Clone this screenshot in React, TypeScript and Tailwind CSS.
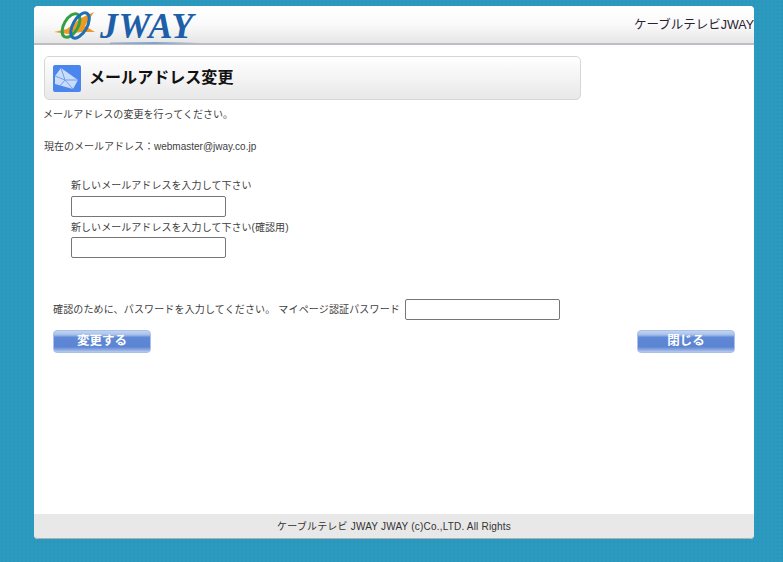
const sans = 'font-["Liberation_Sans","Noto_Sans_CJK_JP",sans-serif]';

function Logo() {
  return (
    <div className="flex items-center ml-[20px] h-full">
      <svg width="44" height="32" viewBox="0 0 44 32" className="shrink-0 mt-[2px]">
        <path d="M0 22 L13 19 L27 8 L40 2 L31 16 L41 22 L27 22 L14 24 Z" fill="#ee9a22" />
        <ellipse cx="17" cy="15.5" rx="7" ry="13" transform="rotate(30 17 15.5)" fill="none" stroke="#35a043" strokeWidth="3" />
        <ellipse cx="26" cy="15.5" rx="7" ry="14" transform="rotate(30 26 15.5)" fill="none" stroke="#1f6fb5" strokeWidth="3" />
      </svg>
      <div className="relative ml-[2px] mt-[3px]">
        <span className='block font-["Liberation_Serif",serif] italic font-bold text-[36px] leading-[34px] tracking-[0.6px] text-[#1d5fa8]'>JWAY</span>
        <div className="absolute left-[10px] right-[-6px] bottom-[-1px] h-[2px] bg-gradient-to-r from-[#1d5fa8]/20 via-[#7ea5cf] to-transparent" />
      </div>
    </div>
  );
}

function MailIcon() {
  return (
    <svg width="28" height="27" viewBox="0 0 28 27" className="shrink-0">
      <rect width="28" height="27" rx="2" fill="#4a86ee" />
      <path d="M2 11 L8 3 L25 15 L20 24 L2 19 Z" fill="#c9dcf8" />
      <path d="M8 3 L12 15 L25 15 M2 11 L12 15 L7 21 M12 15 L20 24" fill="none" stroke="#6f9ff0" strokeWidth="1" />
    </svg>
  );
}

function GlossButton({ label }: { label: string }) {
  return (
    <button className="w-[98px] h-[23px] rounded-[4px] border border-[#a9c0e8] bg-[linear-gradient(to_bottom,#c3d4f1_0%,#a7c0ea_18%,#5f88d6_30%,#5b84d3_75%,#8eabe3_90%,#bccdee_100%)] text-white text-[12.5px] font-bold leading-none">
      {label}
    </button>
  );
}

function TextBox({ className }: { className: string }) {
  return <input type="text" className={`block h-[21px] rounded-[2px] border border-[#767676] bg-white ${className}`} />;
}

export default function App() {
  return (
    <div className={`${sans} h-[562px] bg-[#2c9abf] bg-[radial-gradient(#2995b9_0.7px,transparent_0.8px)] bg-[length:4px_4px] pt-[6px] pl-[34px] pr-[29px] overflow-hidden`}>
      <div className="h-[533px] rounded-[4px] bg-white flex flex-col overflow-hidden">
        <header className="h-[39px] shrink-0 flex items-center justify-between rounded-t-[4px] border-b-2 border-[#bdbdc3] bg-gradient-to-b from-white via-[#fafafa] to-[#e6e6e6]">
          <Logo />
          <span className="text-[12.5px] text-[#2a2030] whitespace-nowrap pt-[1px]">ケーブルテレビJWAY</span>
        </header>

        <main className="flex-1 pl-[9px] pr-[19px] text-[10px] tracking-[0.05px] text-[#404040] leading-[15px]">
          <div className="mt-[11px] ml-px w-[537px] h-[44px] flex items-center gap-[8px] pl-[8px] rounded-[5px] border border-[#d6d6d6] bg-gradient-to-b from-white to-[#e8e8e8]">
            <MailIcon />
            <h1 className="text-[16px] font-bold text-[#111] mt-[-2px]">メールアドレス変更</h1>
          </div>

          <p className="mt-[7px]">メールアドレスの変更を行ってください。</p>
          <p className="mt-[17px] ml-px tracking-normal">現在のメールアドレス：webmaster@jway.co.jp</p>

          <div className="mt-[24px] ml-[28px]">
            <label className="block">新しいメールアドレスを入力して下さい</label>
            <TextBox className="w-[155px] mt-[3px]" />
            <label className="block mt-[3px]">新しいメールアドレスを入力して下さい(確認用)</label>
            <TextBox className="w-[155px] mt-[2px]" />
          </div>

          <div className="mt-[41px] ml-[10px] flex items-center">
            <span className="whitespace-nowrap tracking-[0.15px]">確認のために、パスワードを入力してください。 マイページ認証パスワード</span>
            <TextBox className="w-[155px] ml-[5px]" />
          </div>

          <div className="mt-[10px] ml-[10px] flex justify-between">
            <GlossButton label="変更する" />
            <GlossButton label="閉じる" />
          </div>
        </main>

        <footer className="h-[25px] shrink-0 flex items-center justify-center bg-[#e8e8e8] border-b border-[#b0b0b0] rounded-b-[4px] text-[10px] tracking-[0.2px] text-[#333]">
          ケーブルテレビ JWAY JWAY (c)Co.,LTD. All Rights
        </footer>
      </div>
    </div>
  );
}
